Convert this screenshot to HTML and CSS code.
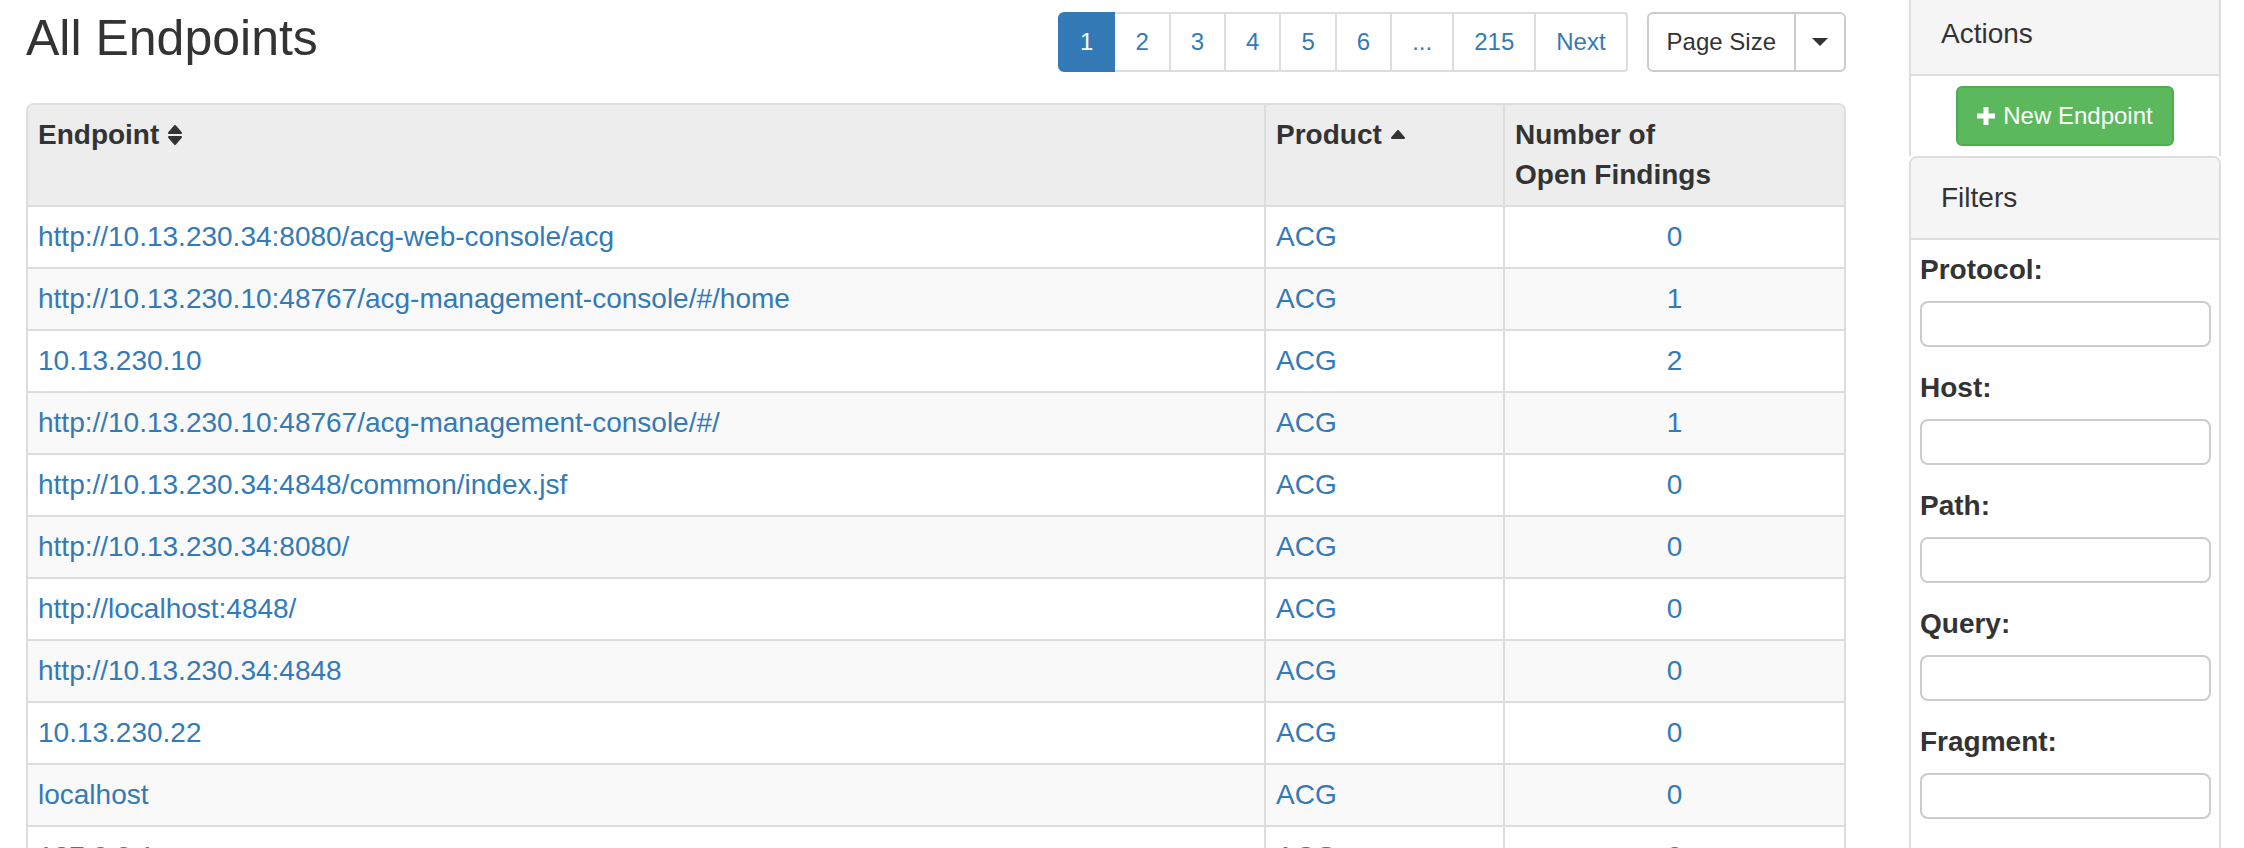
FILE: index.html
```html
<!DOCTYPE html>
<html lang="en">
<head>
<meta charset="utf-8">
<title>All Endpoints</title>
<link rel="stylesheet" href="styles.css">
</head>
<body>
<div class="page">
  <main class="main">
    <div class="top">
      <h1 class="title">All Endpoints</h1>
      <div class="tools">
        <ul class="pagination">
          <li class="active"><a href="#">1</a></li>
          <li><a href="#">2</a></li>
          <li><a href="#">3</a></li>
          <li><a href="#">4</a></li>
          <li><a href="#">5</a></li>
          <li><a href="#">6</a></li>
          <li><a href="#">...</a></li>
          <li><a href="#">215</a></li>
          <li><a href="#">Next</a></li>
        </ul>
        <div class="btn-group">
          <button class="btn">Page Size</button>
          <button class="btn caret-btn"><span class="caret"></span></button>
        </div>
      </div>
    </div>

    <div class="table-wrap">
      <table class="tbl">
        <colgroup><col><col class="c-prod"><col class="c-num"></colgroup>
        <thead>
          <tr>
            <th>Endpoint <svg class="sort" width="16" height="22" viewBox="0 0 16 22"><path d="M2 9 L8 2 L14 9 Z M2 13 L14 13 L8 20 Z" fill="#333" stroke="#333" stroke-width="2" stroke-linejoin="round"/></svg></th>
            <th>Product <svg class="sort" width="16" height="22" viewBox="0 0 16 22"><path d="M2 14 L8 7 L14 14 Z" fill="#333" stroke="#333" stroke-width="2" stroke-linejoin="round"/></svg></th>
            <th>Number of<br>Open Findings</th>
          </tr>
        </thead>
        <tbody>
          <tr><td><a href="#">http://10.13.230.34:8080/acg-web-console/acg</a></td><td><a href="#">ACG</a></td><td class="num"><a href="#">0</a></td></tr>
          <tr><td><a href="#">http://10.13.230.10:48767/acg-management-console/#/home</a></td><td><a href="#">ACG</a></td><td class="num"><a href="#">1</a></td></tr>
          <tr><td><a href="#">10.13.230.10</a></td><td><a href="#">ACG</a></td><td class="num"><a href="#">2</a></td></tr>
          <tr><td><a href="#">http://10.13.230.10:48767/acg-management-console/#/</a></td><td><a href="#">ACG</a></td><td class="num"><a href="#">1</a></td></tr>
          <tr><td><a href="#">http://10.13.230.34:4848/common/index.jsf</a></td><td><a href="#">ACG</a></td><td class="num"><a href="#">0</a></td></tr>
          <tr><td><a href="#">http://10.13.230.34:8080/</a></td><td><a href="#">ACG</a></td><td class="num"><a href="#">0</a></td></tr>
          <tr><td><a href="#">http://localhost:4848/</a></td><td><a href="#">ACG</a></td><td class="num"><a href="#">0</a></td></tr>
          <tr><td><a href="#">http://10.13.230.34:4848</a></td><td><a href="#">ACG</a></td><td class="num"><a href="#">0</a></td></tr>
          <tr><td><a href="#">10.13.230.22</a></td><td><a href="#">ACG</a></td><td class="num"><a href="#">0</a></td></tr>
          <tr><td><a href="#">localhost</a></td><td><a href="#">ACG</a></td><td class="num"><a href="#">0</a></td></tr>
          <tr><td><a href="#">127.0.0.1</a></td><td><a href="#">ACG</a></td><td class="num"><a href="#">0</a></td></tr>
        </tbody>
      </table>
    </div>
  </main>

  <aside class="sidebar">
    <div class="panel panel-actions">
      <div class="panel-heading">Actions</div>
      <div class="actions-body">
        <button class="btn-success"><svg class="plus" width="18" height="18" viewBox="0 0 18 18"><rect x="6.5" y="0" width="5" height="18" fill="#fff"/><rect x="0" y="6.5" width="18" height="5" fill="#fff"/></svg>New Endpoint</button>
      </div>
    </div>
    <div class="panel panel-filters">
      <div class="panel-heading">Filters</div>
      <div class="filters-body">
        <div class="form-group"><label>Protocol:</label><input class="form-control" type="text"></div>
        <div class="form-group"><label>Host:</label><input class="form-control" type="text"></div>
        <div class="form-group"><label>Path:</label><input class="form-control" type="text"></div>
        <div class="form-group"><label>Query:</label><input class="form-control" type="text"></div>
        <div class="form-group"><label>Fragment:</label><input class="form-control" type="text"></div>
      </div>
    </div>
  </aside>
</div>
</body>
</html>
```

FILE: styles.css
```css
* { box-sizing: border-box; }
html, body { margin: 0; padding: 0; overflow: hidden; background: #fff; }
body {
  font-family: "Liberation Sans", Arial, sans-serif;
  font-size: 28px;
  line-height: 40px;
  color: #333;
}
.page {
  display: flex;
  align-items: flex-start;
  gap: 63px;
  padding: 0 23px 0 26px;
}
.main { flex: 1; min-width: 0; }
.top {
  display: flex;
  justify-content: space-between;
  align-items: flex-start;
  padding-top: 12px;
}
.title {
  margin: 0;
  font-size: 50px;
  line-height: 52px;
  font-weight: normal;
  color: #333;
}
.tools { display: flex; gap: 19px; }
.pagination { display: flex; list-style: none; margin: 0; padding: 0; }
.pagination a {
  display: block;
  padding: 10px 20px;
  font-size: 24px;
  line-height: 36px;
  color: #337ab7;
  background: #fff;
  border: 2px solid #ddd;
  margin-left: -2px;
  text-decoration: none;
}
.pagination li:first-child a { margin-left: 0; border-radius: 6px 0 0 6px; }
.pagination li:last-child a { border-radius: 0 4px 4px 0; }
.pagination .active a {
  position: relative;
  background: #337ab7;
  border-color: #337ab7;
  color: #fff;
}
.btn-group { display: flex; }
.btn {
  font-family: inherit;
  font-size: 24px;
  line-height: 36px;
  padding: 10px 18px;
  color: #333;
  background: #fff;
  border: 2px solid #ccc;
  border-radius: 6px 0 0 6px;
}
.caret-btn {
  margin-left: -2px;
  padding: 10px 16px;
  border-radius: 0 6px 6px 0;
  display: flex;
  align-items: center;
}
.caret {
  width: 0; height: 0;
  border-left: 8px solid transparent;
  border-right: 8px solid transparent;
  border-top: 8px solid #333;
}

.table-wrap {
  margin-top: 31px;
  border: 2px solid #ddd;
  border-bottom: none;
  border-radius: 8px 8px 0 0;
  overflow: hidden;
}
.tbl { width: 100%; border-collapse: collapse; table-layout: fixed; }
.c-prod { width: 239px; }
.c-num { width: 340px; }
.tbl th, .tbl td {
  padding: 10px;
  text-align: left;
  vertical-align: top;
  border-left: 2px solid #ddd;
  white-space: nowrap;
}
.tbl th:first-child, .tbl td:first-child { border-left: none; }
.tbl th {
  background: #ededed;
  font-weight: bold;
  height: 100px;
  border-bottom: 2px solid #ddd;
}
.tbl td { border-top: 2px solid #ddd; }
.tbl tbody tr:nth-child(even) td { background: #f9f9f9; }
.tbl a { color: #337ab7; text-decoration: none; }
.tbl td.num { text-align: center; }
.sort { vertical-align: -2px; }

.sidebar { flex: none; width: 312px; margin-top: -10px; }
.panel { border: 2px solid #ddd; border-radius: 8px 8px 0 0; }
.panel-actions { border-bottom: none; border-radius: 0; }
.panel-heading {
  background: #f5f5f5;
  padding: 20px 30px;
  border-bottom: 2px solid #ddd;
  font-size: 28px;
  line-height: 40px;
}
.panel-actions .panel-heading { padding-top: 22px; }
.panel-filters .panel-heading { border-radius: 6px 6px 0 0; }
.actions-body { display: flex; justify-content: center; padding: 10px 0 10px; }
.btn-success {
  display: flex;
  align-items: center;
  gap: 8px;
  font-family: inherit;
  font-size: 24px;
  line-height: 36px;
  padding: 10px 19px;
  color: #fff;
  background: #5cb85c;
  border: 2px solid #4cae4c;
  border-radius: 6px;
}
.filters-body { padding: 10px 8px 40px 9px; }
.form-group { margin-bottom: 21px; }
.form-group label { display: block; font-weight: bold; margin-bottom: 11px; }
.form-control {
  display: block;
  width: 100%;
  height: 46px;
  border: 2px solid #ccc;
  border-radius: 8px;
  background: #fff;
}
```
